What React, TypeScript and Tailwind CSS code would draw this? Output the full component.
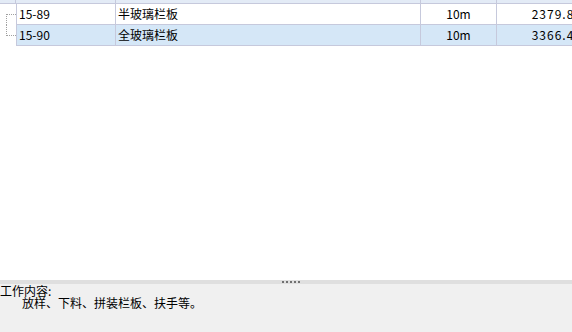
const rows = [
  { code: '15-89', name: '半玻璃栏板', unit: '10m', price: '2379.87', selected: false },
  { code: '15-90', name: '全玻璃栏板', unit: '10m', price: '3366.45', selected: true },
];

const font = { fontFamily: '"Noto Sans CJK SC", "DejaVu Sans", sans-serif' };

export default function App() {
  return (
    <div className="w-[572px] h-[332px] overflow-hidden bg-white flex flex-col text-[12px] text-black" style={font}>
      <div className="flex-1 overflow-hidden">
        <div className="w-[620px]">
          {/* header, mostly scrolled out of view */}
          <div className="flex h-[20px] -mt-[16px] bg-[#e3ebf6] border-b border-[#c6c9dc] leading-[19px]">
            <div className="w-[16px] border-r border-[#c6c9dc]" />
            <div className="w-[100px] border-r border-[#c6c9dc] text-center">编号</div>
            <div className="w-[305px] border-r border-[#c6c9dc] text-center">名称</div>
            <div className="w-[76px] border-r border-[#c6c9dc] text-center">单位</div>
            <div className="w-[88px] text-center">单价</div>
          </div>
          {rows.map((r, i) => (
            <div key={r.code} className="flex h-[21px] leading-[20px]">
              <div className="w-[16px] relative bg-white">
                <div
                  className={
                    'absolute left-[6px] w-0 border-l border-dotted border-[#a0a0a0] ' +
                    (i === 0 ? 'top-[10px] bottom-0' : 'top-0 h-[11px]')
                  }
                />
                <div className="absolute left-[6px] top-[10px] w-[10px] border-t border-dotted border-[#a0a0a0]" />
              </div>
              <div className={'flex flex-1 border-b border-[#c6c9dc] ' + (r.selected ? 'bg-[#d5e7f7]' : 'bg-white')}>
                <div className="w-[100px] border-l border-r border-[#c6c9dc] pl-[2px]">{r.code}</div>
                <div className="w-[305px] border-r border-[#c6c9dc] pl-[2px]">{r.name}</div>
                <div className="w-[76px] border-r border-[#c6c9dc] text-center">{r.unit}</div>
                <div className="w-[88px] text-right pr-[3px] tracking-[1px]">{r.price}</div>
              </div>
            </div>
          ))}
        </div>
      </div>
      {/* splitter */}
      <div className="h-[4px] bg-[#dfdfdf] flex items-start justify-center gap-[2px] pt-[1px] pl-[10px]">
        {[0, 1, 2, 3, 4].map((d) => (
          <div key={d} className="w-[2px] h-[2px] bg-[#707070]" />
        ))}
      </div>
      <div className="h-[48px] bg-[#f0f0f0] pt-[1px] leading-[12px]">
        <div>工作内容:</div>
        <div className="pl-[22px]">放样、下料、拼装栏板、扶手等。</div>
      </div>
    </div>
  );
}
